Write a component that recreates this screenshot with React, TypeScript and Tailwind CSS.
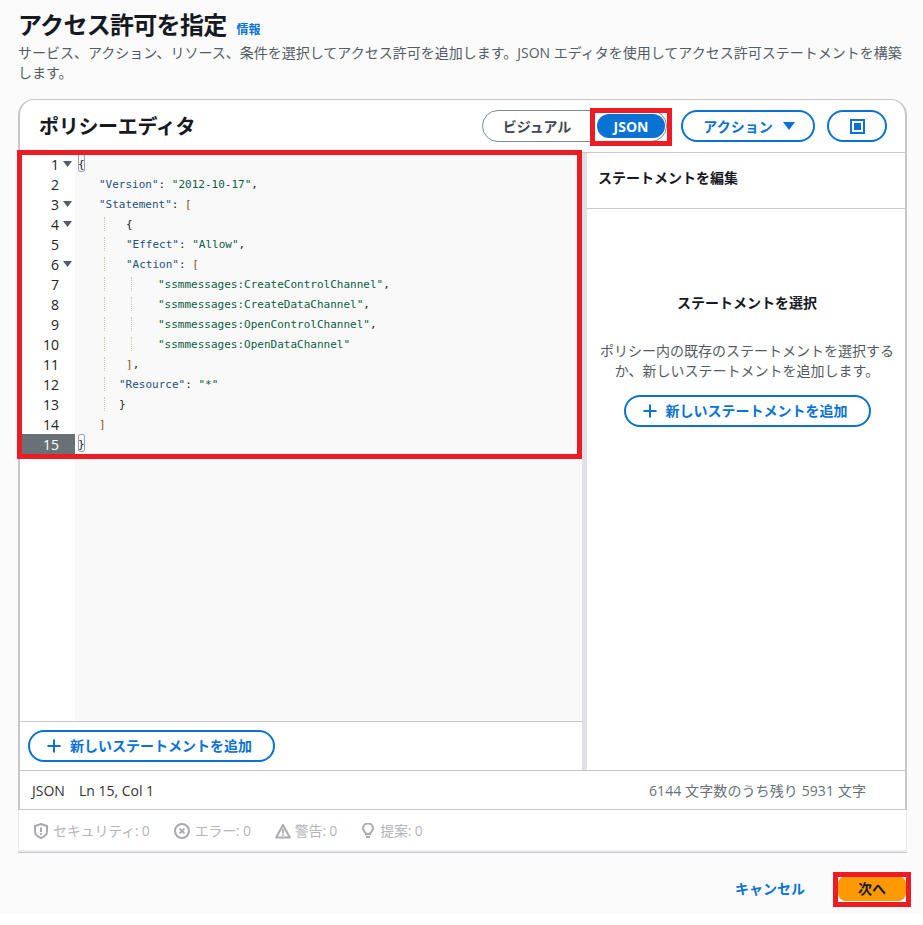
import { Plus } from 'lucide-react'
import type { ReactNode } from 'react'

const K = 'text-[#24507f]'
const S = 'text-[#0b5d45]'
const P = 'text-[#222222]'
const B = 'text-[#94520f]'

type Part = [string, string]
type Line = { n: number; left: string; guides: number; fold?: boolean; parts: Part[] }

const lines: Line[] = [
  { n: 1, left: 'pl-[3px]', guides: 0, fold: true, parts: [['{', P]] },
  { n: 2, left: 'pl-[24px]', guides: 0, parts: [['"Version"', K], [': ', P], ['"2012-10-17"', S], [',', P]] },
  { n: 3, left: 'pl-[24px]', guides: 0, fold: true, parts: [['"Statement"', K], [': ', P], ['[', B]] },
  { n: 4, left: 'pl-[51px]', guides: 1, fold: true, parts: [['{', P]] },
  { n: 5, left: 'pl-[51px]', guides: 1, parts: [['"Effect"', K], [': ', P], ['"Allow"', S], [',', P]] },
  { n: 6, left: 'pl-[51px]', guides: 1, fold: true, parts: [['"Action"', K], [': ', P], ['[', B]] },
  { n: 7, left: 'pl-[83px]', guides: 2, parts: [['"ssmmessages:CreateControlChannel"', S], [',', P]] },
  { n: 8, left: 'pl-[83px]', guides: 2, parts: [['"ssmmessages:CreateDataChannel"', S], [',', P]] },
  { n: 9, left: 'pl-[83px]', guides: 2, parts: [['"ssmmessages:OpenControlChannel"', S], [',', P]] },
  { n: 10, left: 'pl-[83px]', guides: 2, parts: [['"ssmmessages:OpenDataChannel"', S]] },
  { n: 11, left: 'pl-[51px]', guides: 1, parts: [[']', B], [',', P]] },
  { n: 12, left: 'pl-[44px]', guides: 1, parts: [['"Resource"', K], [': ', P], ['"*"', S]] },
  { n: 13, left: 'pl-[44px]', guides: 1, parts: [['}', P]] },
  { n: 14, left: 'pl-[24px]', guides: 0, parts: [[']', B]] },
  { n: 15, left: 'pl-[3px]', guides: 0, parts: [['}', P]] },
]

function AddButton({ className }: { className: string }) {
  return (
    <button className={`flex h-[32px] w-[247px] items-center rounded-full border-2 border-[#0972d3] bg-white pb-[2px] pl-[14px] text-[14px] font-bold text-[#0972d3] ${className}`}>
      <Plus size={20} strokeWidth={2.4} className="mr-[6px] translate-y-[1px]" />
      新しいステートメントを追加
    </button>
  )
}

function CodeRow({ line }: { line: Line }) {
  const active = line.n === 15
  return (
    <div className="flex h-5">
      <div className={`flex w-[55px] shrink-0 items-center ${active ? 'bg-[#687078] text-white' : 'text-[#222222]'}`}>
        <span className="w-[39px] text-right text-[14px]">{line.n}</span>
        {line.fold && (
          <svg width="9" height="6" viewBox="0 0 9 6" className="ml-[4px]">
            <path d="M0 0h9L4.5 6z" fill="#545b64" />
          </svg>
        )}
      </div>
      <div className={`relative flex-1 whitespace-pre pt-[1px] font-['DejaVu_Sans_Mono',monospace] text-[11px] leading-5 ${line.left}`}>
        {line.guides > 0 && <span className="absolute left-[29px] top-[3px] h-[14px] border-l border-dotted border-[#c9c4b4]" />}
        {line.guides > 1 && <span className="absolute left-[56px] top-[3px] h-[14px] border-l border-dotted border-[#c9c4b4]" />}
        {(line.n === 1 || active) && (
          <span className="absolute left-[3px] top-0 h-[18px] w-[7px] rounded-[2px] border border-[#9aa0b4]" />
        )}
        {line.parts.map(([text, color], i) => (
          <span key={i} className={color}>{text}</span>
        ))}
      </div>
    </div>
  )
}

function Stat({ icon, label, className }: { icon: ReactNode; label: string; className: string }) {
  return (
    <span className={`flex items-center ${className}`}>
      {icon}
      {label}
    </span>
  )
}

const ShieldIcon = (
  <svg width="16" height="16" viewBox="0 0 16 16" fill="none" stroke="#a9a9b0" strokeWidth="2">
    <path d="M8 1l6 2v5c0 3.4-2.8 5.8-6 7-3.2-1.2-6-3.6-6-7V3z" />
    <path d="M8 4.5v4.5M8 10.2v1.8" />
  </svg>
)

const ErrorIcon = (
  <svg width="16" height="16" viewBox="0 0 16 16" fill="none" stroke="#a9a9b0" strokeWidth="2">
    <circle cx="8" cy="8" r="7" />
    <path d="M5.6 5.6l4.8 4.8M10.4 5.6l-4.8 4.8" />
  </svg>
)

const WarningIcon = (
  <svg width="16" height="16" viewBox="0 0 16 16" fill="none" stroke="#a9a9b0" strokeWidth="2">
    <path d="M8 2l6.8 12.5H1.2z" strokeLinejoin="round" />
    <path d="M8 6v4.4M8 11.2v1.6" strokeWidth="1.8" />
  </svg>
)

const BulbIcon = (
  <svg width="14" height="16" viewBox="0 0 14 16" fill="none" stroke="#a9a9b0" strokeWidth="2">
    <path d="M5 11c0-1.7-3-2.6-3-5.6a5 5 0 0 1 10 0c0 3-3 3.9-3 5.6z" />
    <path d="M5 14h4" strokeWidth="2.4" />
  </svg>
)

export default function App() {
  return (
    <div className="h-[925px] w-[923px] bg-white font-['Open_Sans','Noto_Sans_CJK_JP',sans-serif] text-[#16191f]">
      <div className="relative h-[914px] bg-[#fbfbfc] px-[18px]">
        <div className="flex items-baseline pt-[7px]">
          <h1 className="text-[24px] font-bold leading-9 tracking-[-0.7px]">アクセス許可を指定</h1>
          <a className="ml-[10px] text-[12px] font-bold text-[#0972d3]">情報</a>
        </div>
        <p className="text-[14px] leading-5 text-[#545b64]">
          サービス、アクション、リソース、条件を選択してアクセス許可を追加します。JSON エディタを使用してアクセス許可ステートメントを構築します。
        </p>

        <div className="mt-[16px] w-[889px]">
          <div className="overflow-hidden rounded-t-[16px] border-x-2 border-t border-[#c6c6cd] bg-white">
            <div className="flex h-[52px] items-center pl-[19px] pr-[18px]">
              <h2 className="flex-1 pt-[2px] text-[20px] font-bold tracking-[-0.3px]">ポリシーエディタ</h2>
              <div className="flex h-[32px] w-[185px] items-center rounded-full border border-[#7d8998] pl-[3px] pr-[1px] text-[14px] font-bold">
                <span className="flex-1 pr-[9px] text-center text-[#424650]">ビジュアル</span>
                <span className="flex h-[24px] w-[68px] items-center justify-center rounded-full bg-[#0972d3] text-white">JSON</span>
              </div>
              <button className="ml-[14px] flex h-[32px] w-[134px] items-center justify-center gap-[10px] rounded-full border-2 border-[#0972d3] pl-[2px] text-[14px] font-bold text-[#0972d3]">
                アクション
                <svg width="12" height="8" viewBox="0 0 12 8"><path d="M0 0h12L6 8z" fill="#0972d3" /></svg>
              </button>
              <button className="ml-[12px] flex h-[32px] w-[60px] items-center justify-center rounded-full border-2 border-[#0972d3]">
                <span className="flex h-[15px] w-[15px] items-center justify-center border-2 border-[#0972d3]">
                  <span className="h-[7px] w-[7px] bg-[#0972d3]" />
                </span>
              </button>
            </div>

            <div className="flex h-[618px] border-t border-[#c6c6cd]">
              <div className="flex w-[562px] flex-col">
                <div className="flex-1 pt-[1px] [background:linear-gradient(to_right,#ffffff_55px,#f9f9f9_55px)]">
                  {lines.map((line) => (
                    <CodeRow key={line.n} line={line} />
                  ))}
                </div>
                <div className="flex h-[49px] items-center border-t border-[#c6c6cd] pl-[8px]">
                  <AddButton className="" />
                </div>
              </div>
              <div className="w-[5px] bg-[#e0e0e6]" />
              <div className="flex flex-1 flex-col">
                <div className="flex h-[56px] items-center border-b border-[#c6c6cd] pb-[7px] pl-[11px] text-[14px] font-bold">ステートメントを編集</div>
                <div className="flex flex-col items-center pl-[2px] pt-[84px] text-center">
                  <div className="text-[14px] font-bold leading-5">ステートメントを選択</div>
                  <p className="mt-[28px] w-[300px] text-[14px] leading-5 text-[#545b64]">
                    ポリシー内の既存のステートメントを選択するか、新しいステートメントを追加します。
                  </p>
                  <AddButton className="mt-[14px]" />
                </div>
              </div>
            </div>

            <div className="flex h-[40px] items-center justify-between border-y border-[#c6c6cd] pl-[12px] pr-[39px] text-[14px]">
              <span className="text-[#333333]">JSON<span className="ml-[14px]">Ln 15, Col 1</span></span>
              <span className="tracking-[0.1px] text-[#687078]">6144 文字数のうち残り 5931 文字</span>
            </div>
          </div>

          <div className="flex h-[42px] items-center gap-[24px] border-x border-b-2 border-[#e9ebed] bg-white pl-[14px] pt-[1px] text-[14px] tracking-[-0.2px] text-[#b4b4bb] shadow-[0_1px_0_#c6c6cd]">
            <Stat icon={ShieldIcon} label="セキュリティ: 0" className="gap-[4px]" />
            <Stat icon={ErrorIcon} label="エラー: 0" className="gap-[5px]" />
            <Stat icon={WarningIcon} label="警告: 0" className="gap-[4px]" />
            <Stat icon={BulbIcon} label="提案: 0" className="gap-[5px]" />
          </div>
        </div>

        <div className="mt-[24px] flex items-center justify-end">
          <a className="text-[14px] font-bold text-[#0972d3]">キャンセル</a>
          <button className="-mr-[1px] ml-[33px] h-[25px] w-[68px] rounded-[8px] bg-[#ff9900] text-[14px] font-bold text-[#16191f]">次へ</button>
        </div>

        {/* 赤枠の注釈 */}
        <div className="absolute left-[17px] top-[150px] h-[309px] w-[565px] border-[5px] border-[#ed1c24]" />
        <div className="absolute left-[590px] top-[108px] h-[38px] w-[82px] border-[5px] border-[#ed1c24]" />
        <div className="absolute left-[833px] top-[872px] h-[35px] w-[78px] border-[5px] border-[#ed1c24]" />
      </div>
    </div>
  )
}
